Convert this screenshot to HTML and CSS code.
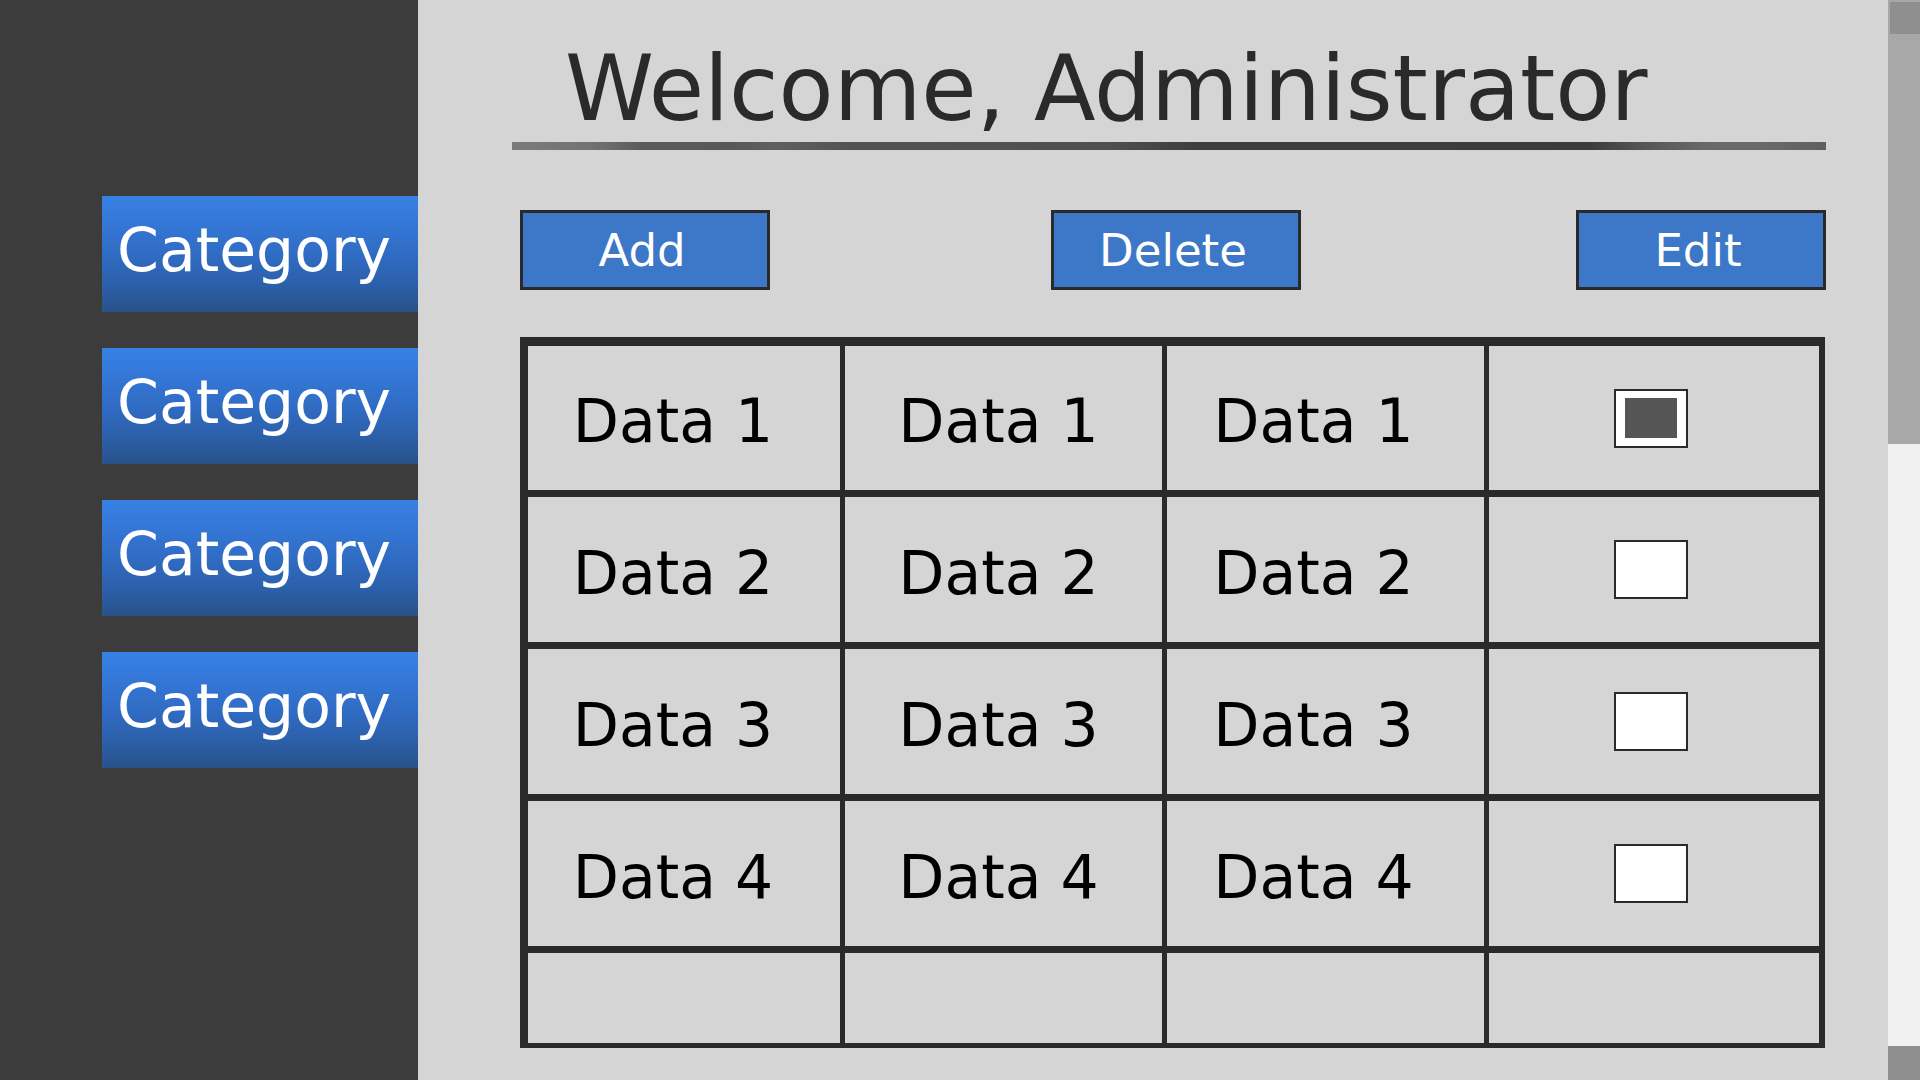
FILE: index.html
```html
<!DOCTYPE html>
<html lang="en">
<head>
<meta charset="utf-8">
<title>Admin</title>
<link rel="stylesheet" href="styles.css">
</head>
<body>
<div class="app">
  <nav class="sidebar">
    <a class="cat">Category</a>
    <a class="cat">Category</a>
    <a class="cat">Category</a>
    <a class="cat">Category</a>
  </nav>
  <main class="main">
    <h1 class="title">Welcome, Administrator</h1>
    <div class="rule"></div>
    <div class="actions">
      <button class="btn">Add</button>
      <button class="btn btn-mid">Delete</button>
      <button class="btn">Edit</button>
    </div>
    <div class="table">
      <div class="cell c1">Data 1</div><div class="cell c2">Data 1</div><div class="cell c3">Data 1</div><div class="cell c4"><span class="box checked"><span class="mark"></span></span></div>
      <div class="cell c1">Data 2</div><div class="cell c2">Data 2</div><div class="cell c3">Data 2</div><div class="cell c4"><span class="box"></span></div>
      <div class="cell c1">Data 3</div><div class="cell c2">Data 3</div><div class="cell c3">Data 3</div><div class="cell c4"><span class="box"></span></div>
      <div class="cell c1">Data 4</div><div class="cell c2">Data 4</div><div class="cell c3">Data 4</div><div class="cell c4"><span class="box"></span></div>
      <div class="cell"></div><div class="cell"></div><div class="cell"></div><div class="cell"></div>
    </div>
  </main>
  <div class="scrollbar">
    <div class="sb-thumb"><div class="sb-up"></div></div>
    <div class="sb-track"></div>
    <div class="sb-down"></div>
  </div>
</div>
</body>
</html>
```

FILE: styles.css
```css
html, body {
  margin: 0;
  padding: 0;
  height: 100%;
  overflow: hidden;
}

body {
  font-family: "DejaVu Sans", "Verdana", sans-serif;
}

.app {
  display: flex;
  width: 1920px;
  height: 1080px;
}

.sidebar {
  width: 418px;
  flex: none;
  background: #3c3c3c;
  box-sizing: border-box;
  padding-top: 196px;
  padding-left: 102px;
  display: flex;
  flex-direction: column;
  gap: 36px;
}

.cat {
  display: block;
  width: 316px;
  height: 116px;
  box-sizing: border-box;
  padding-left: 15px;
  padding-bottom: 8px;
  line-height: 108px;
  font-size: 60px;
  color: #ffffff;
  background: linear-gradient(to bottom, #3781e4 0%, #3579da 20%, #306cc4 50%, #2c5fa8 78%, #285189 100%);
  white-space: nowrap;
}

.main {
  width: 1470px;
  flex: none;
  background: #d5d5d5;
  box-sizing: border-box;
  padding-left: 94px;
  display: flex;
  flex-direction: column;
}

.title {
  margin: 0;
  padding-top: 44px;
  padding-left: 53px;
  font-size: 90px;
  line-height: 90px;
  font-weight: normal;
  color: #2a2a2a;
  white-space: nowrap;
}

.rule {
  width: 1314px;
  height: 8px;
  margin-top: 8px;
  background: linear-gradient(to right, #7b7b7b 0%, #737373 6%, #5a5a5a 10%, #585858 17%, #606060 20%, #525252 26%, #505050 45%, #3e3e3e 52%, #3c3c3c 82%, #555555 86%, #6a6a6a 91%, #6a6a6a 95%, #5f5f5f 100%);
}

.actions {
  margin-top: 60px;
  margin-left: 8px;
  width: 1306px;
  display: flex;
  justify-content: space-between;
}

.btn {
  width: 250px;
  height: 80px;
  box-sizing: border-box;
  border: 3px solid #2a2a2a;
  background: #3c78c7;
  color: #ffffff;
  font-family: "DejaVu Sans", sans-serif;
  font-size: 45px;
  line-height: 76px;
  padding: 0 6px 0 0;
  text-align: center;
}

.btn-mid {
  margin-left: 6px;
}

.table {
  margin-top: 47px;
  margin-left: 8px;
  width: 1305px;
  box-sizing: border-box;
  background: #2a2a2a;
  padding: 9px 6px 5px 8px;
  display: grid;
  grid-template-columns: 312px 317px 317px 330px;
  grid-template-rows: 144px 145px 145px 145px 90px;
  column-gap: 5px;
  row-gap: 7px;
}

.cell {
  background: #d5d5d5;
  display: flex;
  align-items: center;
  justify-content: center;
  font-size: 60px;
  color: #000000;
  white-space: nowrap;
  box-sizing: border-box;
  padding-top: 6px;
}

.c1 { padding-right: 22px; }
.c2 { padding-right: 10px; }
.c3 { padding-right: 24px; }
.c4 { padding-top: 0; padding-right: 6px; }

.box {
  width: 74px;
  height: 59px;
  box-sizing: border-box;
  border: 2px solid #2a2a2a;
  background: #ffffff;
  display: flex;
  align-items: center;
  justify-content: center;
}

.mark {
  width: 52px;
  height: 40px;
  background: #555555;
}

.scrollbar {
  width: 32px;
  flex: none;
  display: flex;
  flex-direction: column;
}

.sb-thumb {
  height: 444px;
  background: #a8a8a8;
  padding: 2px 0 0 2px;
  box-sizing: border-box;
}

.sb-up {
  height: 32px;
  background: #8f8f8f;
}

.sb-track {
  flex: 1;
  background: #f1f1f1;
}

.sb-down {
  height: 34px;
  background: #8f8f8f;
}
```
